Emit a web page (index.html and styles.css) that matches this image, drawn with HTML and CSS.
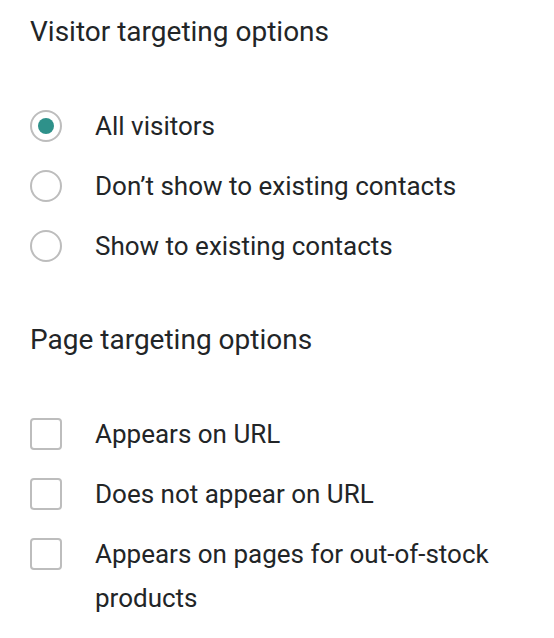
FILE: index.html
```html
<!DOCTYPE html>
<html>

<head>
    <title>Targeting options</title>
    <meta charset="utf-8">
    <link rel="stylesheet" href="styles.css">
</head>

<body>
    <div class="container">
        <div class="section">
            <h2 class="section-title">Visitor targeting options</h2>
            <div class="option-list">
                <label class="option">
                    <input type="radio" name="visitors" class="option-input" checked>
                    <span class="radio"></span>
                    <span class="option-text">All visitors</span>
                </label>
                <label class="option">
                    <input type="radio" name="visitors" class="option-input">
                    <span class="radio"></span>
                    <span class="option-text">Don’t show to existing contacts</span>
                </label>
                <label class="option">
                    <input type="radio" name="visitors" class="option-input">
                    <span class="radio"></span>
                    <span class="option-text">Show to existing contacts</span>
                </label>
            </div>
        </div>

        <div class="section">
            <h2 class="section-title">Page targeting options</h2>
            <div class="option-list">
                <label class="option">
                    <input type="checkbox" class="option-input">
                    <span class="checkbox"></span>
                    <span class="option-text">Appears on URL</span>
                </label>
                <label class="option">
                    <input type="checkbox" class="option-input">
                    <span class="checkbox"></span>
                    <span class="option-text">Does not appear on URL</span>
                </label>
                <label class="option">
                    <input type="checkbox" class="option-input">
                    <span class="checkbox"></span>
                    <span class="option-text">Appears on pages for out-of-stock products</span>
                </label>
            </div>
        </div>
    </div>
</body>

</html>
```

FILE: styles.css
```css
body {
    margin: 0;
    padding: 14px 30px 0 30px;
    font-family: Roboto, "Liberation Sans", sans-serif;
    color: #222527;
    background-color: white;
}

.container {
    display: flex;
    flex-direction: column;
    gap: 54px;
}

.section-title {
    margin: 0 0 54px 0;
    font-size: 28px;
    line-height: 36px;
    font-weight: normal;
}

.option-list {
    display: flex;
    flex-direction: column;
    gap: 16px;
}

.option {
    display: flex;
    align-items: flex-start;
    gap: 33px;
    cursor: pointer;
}

.option-text {
    font-size: 26px;
    line-height: 44px;
}

.option-input {
    display: none;
}

.radio,
.checkbox {
    flex: none;
    width: 32px;
    height: 32px;
    margin-top: 6px;
    box-sizing: border-box;
    border: 2px solid #bdbdbd;
    background-color: white;
}

.radio {
    position: relative;
    border-radius: 50%;
}

.checkbox {
    border-radius: 4px;
}

.option-input:checked+.radio:before {
    position: absolute;
    content: "";
    left: 6px;
    top: 6px;
    width: 16px;
    height: 16px;
    border-radius: 50%;
    background-color: #2e918a;
}
```
